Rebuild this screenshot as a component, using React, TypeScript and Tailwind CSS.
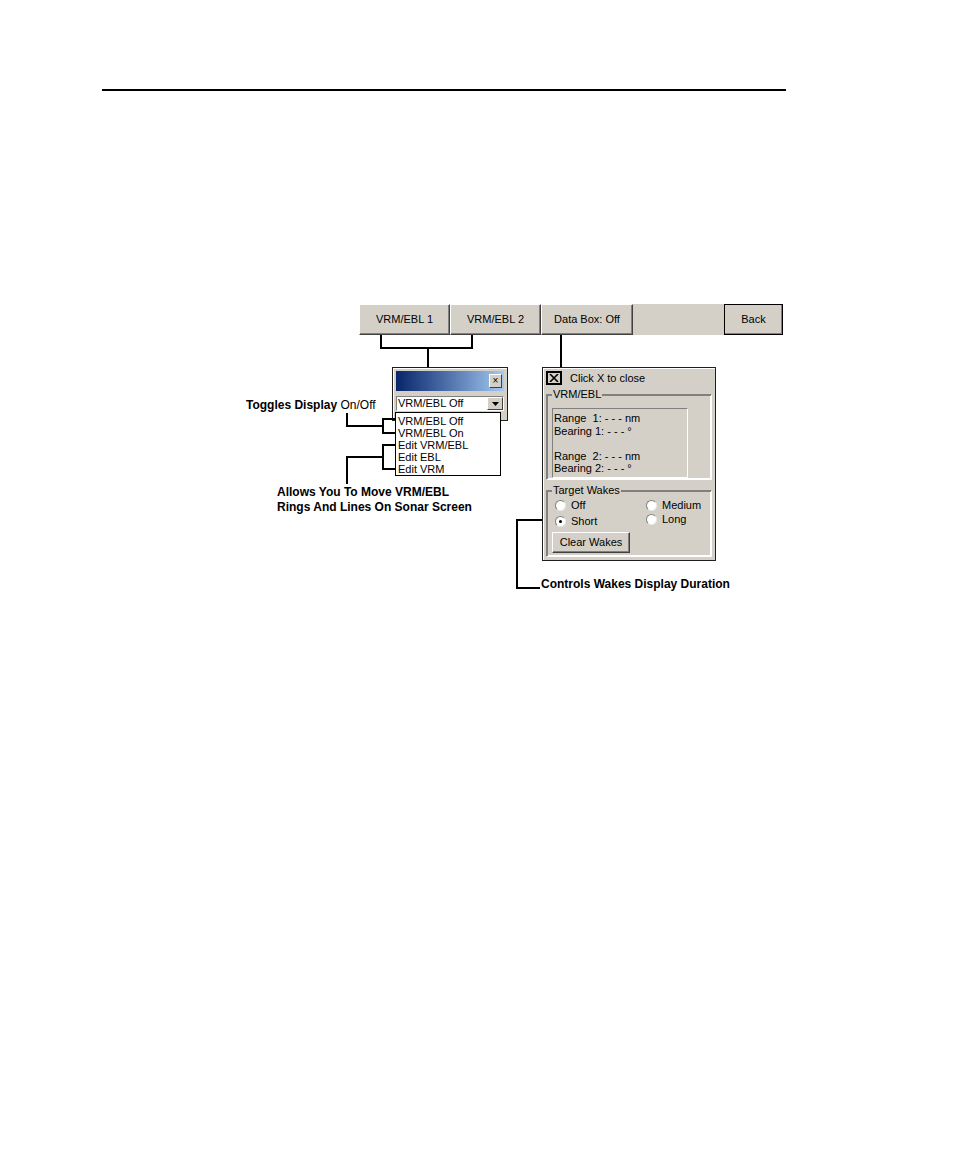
import React from 'react';

const ui = "font-['Liberation_Sans',Arial,sans-serif] text-[11px] text-black leading-none";

function ToolButton({ label, w, def }: { label: string; w: string; def?: boolean }) {
  return (
    <div
      className={`${w} h-full flex items-center justify-center bg-[#d4d0c8] border border-t-white border-l-white border-b-[#404040] border-r-[#404040] shadow-[inset_-1px_-1px_0_#808080] ${def ? 'outline outline-1 outline-black -outline-offset-1' : ''}`}
    >
      {label}
    </div>
  );
}

function Radio({ label, on }: { label: string; on?: boolean }) {
  return (
    <div className="flex items-center gap-[5px]">
      <span className="w-[11px] h-[11px] rounded-full bg-white border border-t-[#808080] border-l-[#808080] border-b-[#e8e8e8] border-r-[#e8e8e8] flex items-center justify-center">
        {on && <span className="w-[3px] h-[3px] rounded-full bg-black" />}
      </span>
      <span>{label}</span>
    </div>
  );
}

export default function App() {
  return (
    <div className="relative w-[954px] h-[1159px] bg-white overflow-hidden">
      <div className="ml-[102px] pt-[89px]">
        <div className="w-[684px] h-[2px] bg-black" />
      </div>

      {/* toolbar */}
      <div className={`${ui} absolute left-[359px] top-[304px] w-[424px] h-[31px] bg-[#d4d0c8] flex`}>
        <ToolButton label="VRM/EBL 1" w="w-[91px]" />
        <ToolButton label="VRM/EBL 2" w="w-[91px]" />
        <ToolButton label="Data Box: Off" w="w-[92px]" />
        <div className="flex-1" />
        <ToolButton label="Back" w="w-[59px]" def />
      </div>

      {/* small VRM/EBL window */}
      <div className={`${ui} absolute left-[392px] top-[367px] w-[116px] h-[54px] bg-[#d4d0c8] border border-[#202020] shadow-[inset_1px_1px_0_#ffffff] p-[3px]`}>
        <div className="h-[20px] bg-gradient-to-r from-[#0a246a] to-[#a6caf0] flex items-center justify-end pr-[2px]">
          <div className="w-[13px] h-[14px] bg-[#d4d0c8] border border-t-white border-l-white border-b-[#404040] border-r-[#404040] flex items-center justify-center text-[10px]">×</div>
        </div>
        <div className="mt-[5px] h-[15px] bg-white border border-t-[#808080] border-l-[#808080] border-b-white border-r-white flex items-center">
          <span className="flex-1 pl-[1px]">VRM/EBL Off</span>
          <div className="w-[16px] h-[13px] bg-[#d4d0c8] border border-t-white border-l-white border-b-[#404040] border-r-[#404040] flex items-center justify-center">
            <svg width="7" height="4" viewBox="0 0 7 4"><path d="M0 0h7L3.5 4z" fill="#000" /></svg>
          </div>
        </div>
      </div>

      {/* dropdown list */}
      <div className={`${ui} absolute left-[395px] top-[412px] w-[106px] h-[64px] bg-white border border-black pt-[2px] pl-[2px] flex flex-col`}>
        {['VRM/EBL Off', 'VRM/EBL On', 'Edit VRM/EBL', 'Edit EBL', 'Edit VRM'].map((t) => (
          <div key={t} className="h-[12px] flex items-center">{t}</div>
        ))}
      </div>

      {/* data box window */}
      <div className={`${ui} absolute left-[542px] top-[367px] w-[174px] h-[194px] bg-[#d4d0c8] border border-[#202020] shadow-[inset_1px_1px_0_#ffffff] px-[3px] pt-[3px] flex flex-col`}>
        <div className="flex items-center gap-[8px]">
          <div className="w-[16px] h-[14px] border-2 border-black flex items-center justify-center bg-[#d4d0c8]">
            <svg width="10" height="8" viewBox="0 0 10 8"><path d="M1 0L9 8M9 0L1 8" stroke="#000" strokeWidth="1.6" /></svg>
          </div>
          <span>Click X to close</span>
        </div>

        <div className="relative mt-[9px] h-[86px] border border-t-[#808080] border-l-[#808080] border-b-white border-r-white shadow-[1px_1px_0_#808080_inset,-1px_-1px_0_#ffffff_inset]">
          <span className="absolute -top-[6px] left-[5px] px-[1px] bg-[#d4d0c8]">VRM/EBL</span>
          <div className="mt-[13px] ml-[5px] w-[136px] h-[70px] border border-t-[#808080] border-l-[#808080] border-b-white border-r-white pl-[1px] pt-[4px] flex flex-col">
            <div className="h-[12.5px]">Range&nbsp; 1: - - - nm</div>
            <div className="h-[12.5px]">Bearing 1: - - - °</div>
            <div className="h-[12.5px]" />
            <div className="h-[12.5px]">Range&nbsp; 2: - - - nm</div>
            <div className="h-[12.5px]">Bearing 2: - - - °</div>
          </div>
        </div>

        <div className="relative mt-[10px] h-[67px] border border-t-[#808080] border-l-[#808080] border-b-white border-r-white shadow-[1px_1px_0_#808080_inset,-1px_-1px_0_#ffffff_inset]">
          <span className="absolute -top-[6px] left-[5px] px-[1px] bg-[#d4d0c8]">Target Wakes</span>
          <div className="mt-[9px] ml-[8px] grid grid-cols-[91px_1fr]">
            <div className="flex flex-col gap-[5px]">
              <Radio label="Off" />
              <Radio label="Short" on />
            </div>
            <div className="flex flex-col gap-[3px]">
              <Radio label="Medium" />
              <Radio label="Long" />
            </div>
          </div>
          <div className="mt-[5px] ml-[5px] w-[78px] h-[21px] flex items-center justify-center border border-t-white border-l-white border-b-[#404040] border-r-[#404040] shadow-[inset_-1px_-1px_0_#808080]">
            Clear Wakes
          </div>
        </div>
      </div>

      {/* callout lines */}
      <svg className="absolute left-0 top-0 pointer-events-none" width="954" height="1159" viewBox="0 0 954 1159">
        <g fill="none" stroke="#000" strokeWidth="2">
          <path d="M381 335V348H472V335M428 348V367" />
          <path d="M561 335V367" />
          <path d="M347 413V426H383M396 419H383V433H396" />
          <path d="M396 445H383V469H396M383 457H347V484" />
          <path d="M542 520H517V588H540" />
        </g>
      </svg>

      {/* annotations */}
      <div className="absolute left-[246px] top-[398px] font-['Liberation_Sans',Arial,sans-serif] text-[12px] leading-[14px] text-black whitespace-nowrap">
        <span className="font-bold">Toggles Display </span>On/Off
      </div>
      <div className="absolute left-[277px] top-[485px] font-['Liberation_Sans',Arial,sans-serif] text-[12px] leading-[15px] font-bold text-black whitespace-nowrap">
        <div>Allows You To Move VRM/EBL</div>
        <div>Rings And Lines On Sonar Screen</div>
      </div>
      <div className="absolute left-[541px] top-[577px] font-['Liberation_Sans',Arial,sans-serif] text-[12px] leading-[14px] font-bold text-black whitespace-nowrap">
        Controls Wakes Display Duration
      </div>
    </div>
  );
}
